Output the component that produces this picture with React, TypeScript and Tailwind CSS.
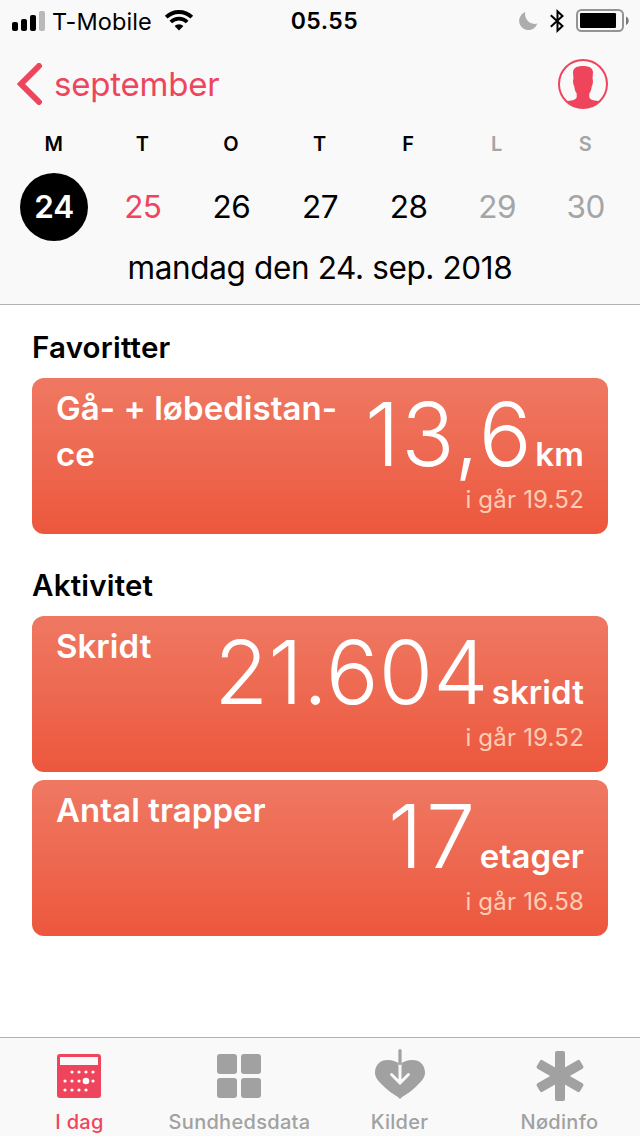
import type { ReactNode } from "react";

const weekdays = [
  { letter: "M", date: "24", tone: "text-black" },
  { letter: "T", date: "25", tone: "text-black" },
  { letter: "O", date: "26", tone: "text-black" },
  { letter: "T", date: "27", tone: "text-black" },
  { letter: "F", date: "28", tone: "text-black" },
  { letter: "L", date: "29", tone: "text-[#a5a5a5]" },
  { letter: "S", date: "30", tone: "text-[#a5a5a5]" },
];

function StatusBar() {
  return (
    <div className="grid h-[41px] grid-cols-3 items-center text-black">
      <div className="flex items-center pl-3">
        <svg width="34" height="20" viewBox="0 0 34 20">
          <rect x="0" y="11" width="6" height="9" rx="2" />
          <rect x="9" y="8" width="6" height="12" rx="2" />
          <rect x="18" y="4" width="6" height="16" rx="2" />
          <rect x="27" y="0" width="6" height="20" rx="2" fill="#b9b9b9" />
        </svg>
        <span className="ml-[6px] text-[23.5px] leading-[41px] tracking-[0.1px] whitespace-nowrap">T-Mobile</span>
        <svg className="ml-3 shrink-0" width="30" height="22" viewBox="0 0 30 22" fill="none" stroke="#000" strokeWidth="3.8">
          <path d="M2.2 7.2A18.3 18.3 0 0 1 27.8 7.2" />
          <path d="M6.8 12A11.8 11.8 0 0 1 23.2 12" />
          <path d="M15 20.5L10.6 16A6.3 6.3 0 0 1 19.4 16Z" fill="#000" stroke="none" />
        </svg>
      </div>
      <div className="pt-px pl-[9px] text-center text-[23px] leading-[41px] font-[580] tracking-[0.5px]">05.55</div>
      <div className="flex items-center justify-end pr-[11px]">
        <svg width="19" height="20" viewBox="0 0 19 20">
          <path d="M6.3 1A9.3 9.3 0 1 0 18.3 12.6A9.8 9.8 0 0 1 6.3 1Z" fill="#adadad" />
        </svg>
        <svg className="ml-3" width="14" height="24" viewBox="0 0 14 24" fill="none" stroke="#000" strokeWidth="2">
          <path d="M.8 6.2L12.5 17L7.5 21.7V2.3L12.5 7L.8 17.8" />
        </svg>
        <svg className="ml-3" width="53" height="24" viewBox="0 0 53 24">
          <rect x="1" y="1" width="46" height="21" rx="4.5" fill="none" stroke="#949494" strokeWidth="2" />
          <rect x="4" y="4" width="36" height="15" rx="1.2" />
          <path d="M50 7.5C53.6 9 53.6 14.5 50 16Z" fill="#777" />
        </svg>
      </div>
    </div>
  );
}

function Header() {
  return (
    <header className="flex h-[305px] shrink-0 flex-col border-b border-[#b2b2b2] bg-[#f9f9f9]">
      <StatusBar />
      <div className="flex h-[86px] items-center justify-between pr-8 pl-[17px] text-[#ee455d]">
        <div className="flex items-center">
          <svg width="26" height="42" viewBox="0 0 26 42" fill="none" stroke="currentColor" strokeWidth="6" strokeLinecap="round">
            <path d="M22 3L4 21L22 39" />
          </svg>
          <span className="ml-[11px] text-[33px] leading-[42px] tracking-[-0.2px]">september</span>
        </div>
        <svg width="50" height="50" viewBox="0 0 50 50">
          <circle cx="25" cy="25" r="24" fill="none" stroke="currentColor" strokeWidth="2" />
          <path d="M25 7C31 7 35 9 35 13.5L34.5 20C35.3 20 35 26 33.8 27C33.3 31 32.5 33 31.3 34.5V38C31.5 40.5 35 41.5 40.5 42L41 43.3A24.5 24.5 0 0 1 9 43.3L9.5 42C15 41.5 18.5 40.5 18.7 38V34.5C17.5 33 16.7 31 16.2 27C15 26 14.7 20 15.5 20L15 13.5C15 9 19 7 25 7Z" fill="currentColor" />
        </svg>
      </div>
      <div className="grid grid-cols-7 px-[10px] text-center">
        {weekdays.map((day) => (
          <div key={day.date} className={`flex flex-col items-center ${day.tone}`}>
            <span className="pr-px text-[20px] leading-[34px] font-[560]">{day.letter}</span>
            <span
              className={
                day.date === "24"
                  ? "mt-3 size-[68px] rounded-full bg-black text-[31.5px] leading-[68px] font-[580] text-white"
                  : day.date === "25"
                    ? "mt-3 h-[68px] text-[31.5px] leading-[68px] tracking-[-0.5px] text-[#ee455d]"
                    : "mt-3 h-[68px] text-[31.5px] leading-[68px] tracking-[-0.5px]"
              }
            >
              {day.date}
            </span>
          </div>
        ))}
      </div>
      <div className="text-center text-[31.5px] leading-[54px] tracking-[-0.37px] text-black">mandag den 24. sep. 2018</div>
    </header>
  );
}

type CardProps = { title: ReactNode; value: string; unit: string; time: string; spacing: string };

function Card({ title, value, unit, time, spacing }: CardProps) {
  return (
    <article className="flex h-[156px] justify-between rounded-[12px] bg-linear-to-b from-[#ef7862] to-[#ec573d] px-6 text-white">
      <h3 className="pt-[7px] text-[33px] leading-[46px] font-[560] tracking-[0.05px] whitespace-nowrap">{title}</h3>
      <div className="flex flex-col items-end">
        <div className="flex h-[105px] items-baseline whitespace-nowrap">
          <span className={`text-[88px] leading-[112px] font-[280] ${spacing}`}>{value}</span>
          <span className="text-[33px] leading-[46px] font-[560] tracking-[0.1px]">{unit}</span>
        </div>
        <span className="text-[24px] leading-[34px] tracking-[0.2px] text-[#ffcdb4]">{time}</span>
      </div>
    </article>
  );
}

function CalendarIcon() {
  const dots = [
    [15, 18], [22, 18], [29, 18], [36, 18],
    [8, 27], [15, 27], [22, 27], [36, 27],
    [8, 36], [15, 36], [22, 36], [29, 36],
  ];
  return (
    <svg width="46" height="50" viewBox="0 -3 46 50">
      <rect width="44" height="44" rx="3" fill="currentColor" />
      <rect x="3" y="3" width="38" height="8" fill="#f9f9f9" />
      {dots.map(([x, y]) => (
        <circle key={`${x}-${y}`} cx={x} cy={y} r="1.6" fill="#fff" />
      ))}
      <circle cx="29" cy="27" r="3.3" fill="#fff" />
    </svg>
  );
}

function GridIcon() {
  return (
    <svg width="46" height="50" viewBox="0 -3 46 50" fill="currentColor">
      <rect width="20" height="20" rx="3" />
      <rect x="24" width="20" height="20" rx="3" />
      <rect y="24" width="20" height="20" rx="3" />
      <rect x="24" y="24" width="20" height="20" rx="3" />
    </svg>
  );
}

function HeartIcon() {
  return (
    <svg className="overflow-visible" width="50" height="50" viewBox="0 5.5 50 50">
      <path d="M25 53.5C21 49.5 16 48 10 42C4 36 0 33 0 27C0 19 6 14.5 12 14.5C18 14.5 22 16 25 19C28 16 32 14.5 38 14.5C44 14.5 50 19 50 27C50 33 46 36 40 42C34 48 29 49.5 25 53.5Z" fill="currentColor" />
      <path d="M25 18V37M16.5 29L25 37.5L33.5 29" fill="none" stroke="#f9f9f9" strokeWidth="3" strokeLinecap="round" />
      <path d="M25 5V18" stroke="currentColor" strokeWidth="3.2" strokeLinecap="round" />
    </svg>
  );
}

function AsteriskIcon() {
  return (
    <svg width="50" height="50" viewBox="0 0 50 50" fill="currentColor">
      <rect x="20" y="0" width="10" height="50" rx="2" />
      <rect x="20" y="0" width="10" height="50" rx="2" transform="rotate(60 25 25)" />
      <rect x="20" y="0" width="10" height="50" rx="2" transform="rotate(-60 25 25)" />
    </svg>
  );
}

const tabs = [
  { label: "I dag", icon: <CalendarIcon />, tone: "text-[#ee455d]" },
  { label: "Sundhedsdata", icon: <GridIcon />, tone: "text-[#a1a1a1]" },
  { label: "Kilder", icon: <HeartIcon />, tone: "text-[#a1a1a1]" },
  { label: "Nødinfo", icon: <AsteriskIcon />, tone: "text-[#a1a1a1]" },
];

export default function App() {
  return (
    <div className="flex h-[1136px] w-[640px] flex-col overflow-hidden bg-white font-['Inter',sans-serif]">
      <Header />
      <main className="flex flex-1 flex-col px-8">
        <h2 className="mt-[18px] h-[55px] text-[29.5px] leading-[48px] font-[560] tracking-[0.2px]">Favoritter</h2>
        <Card title={<>Gå- + løbedistan-<br />ce</>} value="13,6" unit="km" time="i går 19.52" spacing="tracking-[1.7px] mr-[2px]" />
        <h2 className="mt-[27px] h-[55px] text-[29.5px] leading-[48px] font-[560] tracking-[0.2px]">Aktivitet</h2>
        <div className="flex flex-col gap-2">
          <Card title="Skridt" value="21.604" unit="skridt" time="i går 19.52" spacing="tracking-[0.1px] mr-[3px]" />
          <Card title="Antal trapper" value="17" unit="etager" time="i går 16.58" spacing="tracking-[3.5px] mr-px" />
        </div>
      </main>
      <nav className="grid h-[99px] shrink-0 grid-cols-4 border-t border-[#b2b2b2] bg-[#f9f9f9]">
        {tabs.map((tab) => (
          <div key={tab.label} className={`flex flex-col items-center pt-[13px] ${tab.tone}`}>
            {tab.icon}
            <span className="mt-[6px] pr-px text-[20px] leading-[30px] font-medium tracking-[0.3px] whitespace-nowrap">{tab.label}</span>
          </div>
        ))}
      </nav>
    </div>
  );
}
